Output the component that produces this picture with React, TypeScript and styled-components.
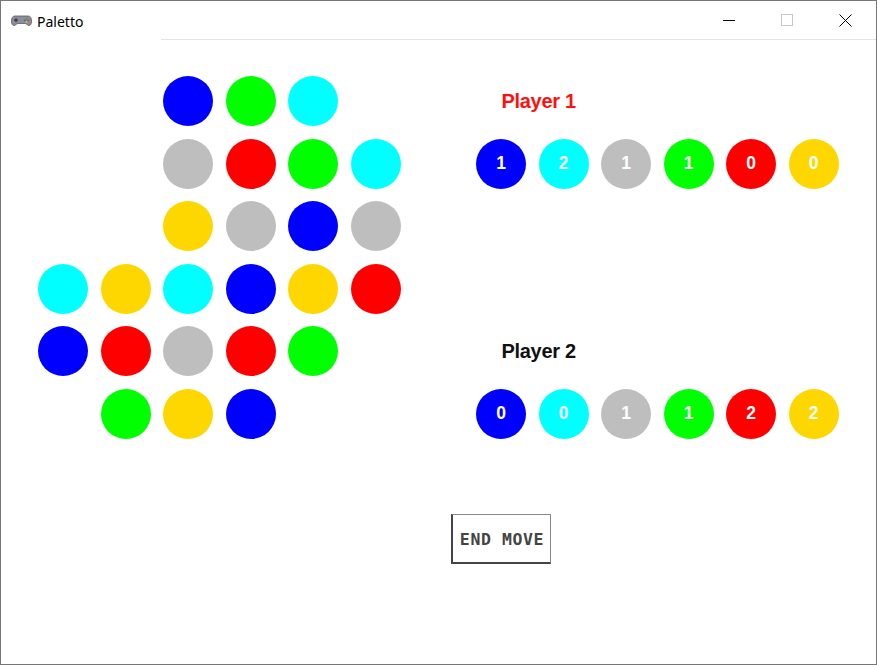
import React from "react";
import styled, { createGlobalStyle } from "styled-components";

const Global = createGlobalStyle`
  html, body { margin: 0; padding: 0; background: #ffffff; }
  * { box-sizing: border-box; }
`;

const COLORS: Record<string, string> = {
  B: "#0000ff",
  G: "#00ff00",
  C: "#00ffff",
  S: "#bebebe",
  R: "#ff0000",
  Y: "#ffd700",
};

const BOARD = [
  "..BGC.",
  "..SRGC",
  "..YSBS",
  "CYCBYR",
  "BRSRG.",
  ".GYB..",
];

const PLAYER_ORDER = ["B", "C", "S", "G", "R", "Y"];
const P1 = [1, 2, 1, 1, 0, 0];
const P2 = [0, 0, 1, 1, 2, 2];

const Window = styled.div`
  width: 877px;
  height: 665px;
  border: 1px solid #767676;
  background: #ffffff;
  display: flex;
  flex-direction: column;
  overflow: hidden;
`;

const TitleBar = styled.div`
  height: 38px;
  display: flex;
  align-items: center;
  flex-shrink: 0;
  padding-right: 2px;
`;

const AppIcon = styled.svg`
  margin-left: 10px;
  width: 21px;
  height: 11px;
  margin-top: 1px;
`;

const Title = styled.span`
  margin-left: 5px;
  font-family: "Noto Sans", "Open Sans", sans-serif;
  font-size: 14px;
  color: #000;
  margin-top: 2px;
`;

const Spacer = styled.div`
  flex: 1;
`;

const CtrlButton = styled.div`
  width: 58px;
  height: 38px;
  display: flex;
  align-items: center;
  justify-content: center;
`;

const Divider = styled.div`
  height: 1px;
  margin-left: 160px;
  background: #e3e3e3;
  flex-shrink: 0;
`;

const Content = styled.div`
  flex: 1;
  display: flex;
  padding: 36px 0 0 37px;
`;

const Grid = styled.div<{ $cols: number; $rows: number }>`
  display: grid;
  grid-template-columns: repeat(${(p) => p.$cols}, 50px);
  grid-template-rows: repeat(${(p) => p.$rows}, 50px);
  gap: 12.5px;
  align-self: flex-start;
`;

const Side = styled(Grid)`
  margin-left: 75.5px;
`;

const Disc = styled.div<{ $color?: string }>`
  width: 50px;
  height: 50px;
  border-radius: 50%;
  background: ${(p) => p.$color ?? "transparent"};
  display: flex;
  align-items: center;
  justify-content: center;
  color: #ffffff;
  font-family: "Liberation Sans", Arial, sans-serif;
  font-weight: bold;
  font-size: 17.5px;
`;

const PlayerLabel = styled.div<{ $row: number; $active?: boolean }>`
  grid-row: ${(p) => p.$row};
  grid-column: 1 / span 3;
  padding-left: 25.5px;
  display: flex;
  align-items: center;
  font-family: "Liberation Sans", Arial, sans-serif;
  font-weight: bold;
  font-size: 20px;
  letter-spacing: -0.3px;
  color: ${(p) => (p.$active ? "#ff1010" : "#111111")};
`;

const DiscRow = styled.div<{ $row: number }>`
  grid-row: ${(p) => p.$row};
  grid-column: 1 / span 6;
  display: grid;
  grid-template-columns: repeat(6, 50px);
  gap: 12.5px;
`;

const EndButton = styled.div`
  grid-row: 8;
  grid-column: 1;
  justify-self: center;
  width: 100px;
  height: 50px;
  border-top: 1px solid #8a8a8a;
  border-right: 1px solid #8a8a8a;
  border-left: 2px solid #444;
  border-bottom: 2px solid #444;
  display: flex;
  align-items: center;
  justify-content: center;
  font-family: "DejaVu Sans Mono", "Liberation Mono", monospace;
  font-weight: bold;
  font-size: 16.5px;
  letter-spacing: 0.6px;
  color: #444444;
  white-space: pre;
  padding-top: 3px;
  padding-left: 1px;
`;

function PlayerRow({ row, values }: { row: number; values: number[] }) {
  return (
    <DiscRow $row={row}>
      {PLAYER_ORDER.map((c, i) => (
        <Disc key={i} $color={COLORS[c]}>
          {values[i]}
        </Disc>
      ))}
    </DiscRow>
  );
}

export default function App() {
  return (
    <>
      <Global />
      <Window>
        <TitleBar>
          <AppIcon viewBox="0 0 21 11">
            <path
              d="M4 1 H17 C19.5 1 20.5 3 20.5 6 C20.5 9 19.5 10.5 18 10.5 C16.5 10.5 15.5 8.5 14 8.5 H7 C5.5 8.5 4.5 10.5 3 10.5 C1.5 10.5 0.5 9 0.5 6 C0.5 3 1.5 1 4 1 Z"
              fill="#8e8e98"
              stroke="#5c5c66"
              strokeWidth="0.8"
            />
            <rect x="3" y="4.5" width="4" height="1.4" fill="#3c3c44" />
            <rect x="4.3" y="3.2" width="1.4" height="4" fill="#3c3c44" />
            <circle cx="15.5" cy="3.8" r="1" fill="#3aa83a" />
            <circle cx="17.2" cy="5.4" r="1" fill="#d93a3a" />
            <circle cx="13.8" cy="5.4" r="1" fill="#3a6ad9" />
            <circle cx="15.5" cy="7" r="1" fill="#e0c030" />
          </AppIcon>
          <Title>Paletto</Title>
          <Spacer />
          <CtrlButton>
            <svg width="12" height="12" viewBox="0 0 12 12">
              <line x1="0" y1="6.5" x2="12" y2="6.5" stroke="#000" strokeWidth="1" />
            </svg>
          </CtrlButton>
          <CtrlButton>
            <svg width="12" height="12" viewBox="0 0 12 12">
              <rect x="0.5" y="0.5" width="11" height="11" fill="none" stroke="#c8c8c8" strokeWidth="1" />
            </svg>
          </CtrlButton>
          <CtrlButton>
            <svg width="13" height="13" viewBox="0 0 13 13">
              <path d="M0.5 0.5 L12.5 12.5 M12.5 0.5 L0.5 12.5" stroke="#000" strokeWidth="1" />
            </svg>
          </CtrlButton>
        </TitleBar>
        <Divider />
        <Content>
          <Grid $cols={6} $rows={6}>
            {BOARD.flatMap((row, r) =>
              row.split("").map((c, i) => (
                <Disc key={`${r}-${i}`} $color={c === "." ? undefined : COLORS[c]} />
              ))
            )}
          </Grid>
          <Side $cols={6} $rows={8}>
            <PlayerLabel $row={1} $active>
              Player 1
            </PlayerLabel>
            <PlayerRow row={2} values={P1} />
            <PlayerLabel $row={5}>Player 2</PlayerLabel>
            <PlayerRow row={6} values={P2} />
            <EndButton>END MOVE</EndButton>
          </Side>
        </Content>
      </Window>
    </>
  );
}
